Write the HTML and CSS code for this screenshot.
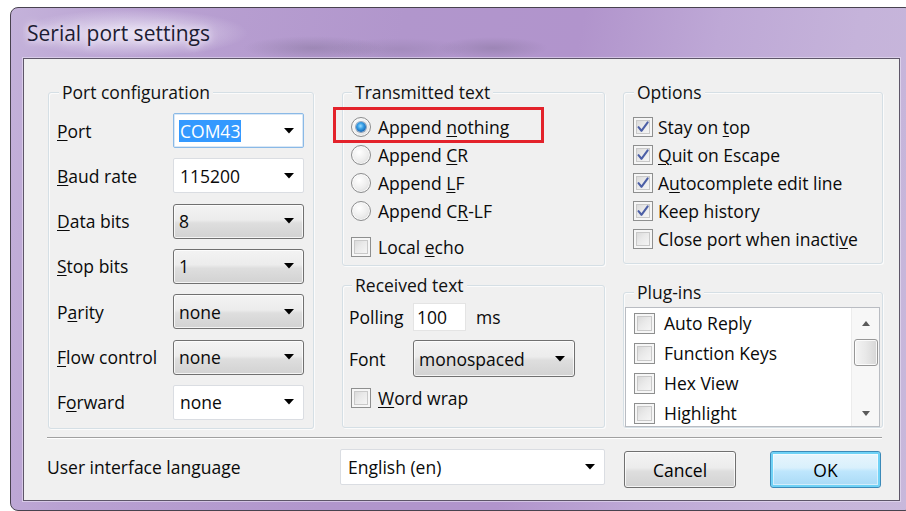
FILE: index.html
```html
<!DOCTYPE html>
<html lang="en">
<head>
<meta charset="utf-8">
<title>Serial port settings</title>
<link rel="stylesheet" href="styles.css">
</head>
<body>
<div class="window">
  <div class="titlebar"><span class="title">Serial port settings</span></div>
  <div class="client">
    <div class="groups">
      <div class="col col-port">
        <div class="group g-port">
          <span class="legend">Port configuration</span>
          <div class="port-grid">
            <span class="lbl"><u>P</u>ort</span>
            <div class="combo combo-edit combo-focus"><span class="sel">COM43</span><svg viewBox="0 0 10 6"><path d="M0 0H10L5 5.5Z"/></svg></div>
            <span class="lbl"><u>B</u>aud rate</span>
            <div class="combo combo-edit"><span>115200</span><svg viewBox="0 0 10 6"><path d="M0 0H10L5 5.5Z"/></svg></div>
            <span class="lbl"><u>D</u>ata bits</span>
            <div class="combo combo-drop"><span>8</span><svg viewBox="0 0 10 6"><path d="M0 0H10L5 5.5Z"/></svg></div>
            <span class="lbl"><u>S</u>top bits</span>
            <div class="combo combo-drop"><span>1</span><svg viewBox="0 0 10 6"><path d="M0 0H10L5 5.5Z"/></svg></div>
            <span class="lbl">P<u>a</u>rity</span>
            <div class="combo combo-drop"><span>none</span><svg viewBox="0 0 10 6"><path d="M0 0H10L5 5.5Z"/></svg></div>
            <span class="lbl"><u>F</u>low control</span>
            <div class="combo combo-drop"><span>none</span><svg viewBox="0 0 10 6"><path d="M0 0H10L5 5.5Z"/></svg></div>
            <span class="lbl">F<u>o</u>rward</span>
            <div class="combo combo-edit"><span>none</span><svg viewBox="0 0 10 6"><path d="M0 0H10L5 5.5Z"/></svg></div>
          </div>
        </div>
      </div>

      <div class="col col-text">
        <div class="group g-tx">
          <span class="legend">Transmitted text</span>
          <div class="radios">
            <div class="opt"><span class="rb on"></span><span>Append <u>n</u>othing</span></div>
            <div class="opt"><span class="rb"></span><span>Append <u>C</u>R</span></div>
            <div class="opt"><span class="rb"></span><span>Append <u>L</u>F</span></div>
            <div class="opt"><span class="rb"></span><span>Append C<u>R</u>-LF</span></div>
          </div>
          <div class="opt echo"><span class="cb"></span><span>Local <u>e</u>cho</span></div>
          <span class="mark"></span>
        </div>
        <div class="group g-rx">
          <span class="legend">Received text</span>
          <div class="rx-row polling">
            <span class="rx-lbl">Polling</span>
            <span class="field">100</span>
            <span class="unit">ms</span>
          </div>
          <div class="rx-row font-row">
            <span class="rx-lbl">Font</span>
            <div class="combo combo-drop combo-font"><span>monospaced</span><svg viewBox="0 0 10 6"><path d="M0 0H10L5 5.5Z"/></svg></div>
          </div>
          <div class="opt wrap"><span class="cb"></span><span><u>W</u>ord wrap</span></div>
        </div>
      </div>

      <div class="col col-opts">
        <div class="group g-opt">
          <span class="legend">Options</span>
          <div class="checks">
            <div class="opt tight"><span class="cb on"><svg viewBox="0 0 20 20"><path d="M5 10.2 8.3 14.2 15.2 4.8"/></svg></span><span>Stay on <u>t</u>op</span></div>
            <div class="opt tight"><span class="cb on"><svg viewBox="0 0 20 20"><path d="M5 10.2 8.3 14.2 15.2 4.8"/></svg></span><span><u>Q</u>uit on Escape</span></div>
            <div class="opt tight"><span class="cb on"><svg viewBox="0 0 20 20"><path d="M5 10.2 8.3 14.2 15.2 4.8"/></svg></span><span>A<u>u</u>tocomplete edit line</span></div>
            <div class="opt tight"><span class="cb on"><svg viewBox="0 0 20 20"><path d="M5 10.2 8.3 14.2 15.2 4.8"/></svg></span><span>Keep history</span></div>
            <div class="opt tight"><span class="cb"></span><span>Close port when inacti<u>v</u>e</span></div>
          </div>
        </div>
        <div class="group g-plug">
          <span class="legend">Plug-ins</span>
          <div class="listbox">
            <div class="items">
              <div class="item"><span class="cb big"></span><span>Auto Reply</span></div>
              <div class="item"><span class="cb big"></span><span>Function Keys</span></div>
              <div class="item"><span class="cb big"></span><span>Hex View</span></div>
              <div class="item"><span class="cb big"></span><span>Highlight</span></div>
            </div>
            <div class="vscroll">
              <span class="sb-btn"><svg viewBox="0 0 8 5"><path d="M0 5H8L4 0Z"/></svg></span>
              <span class="thumb"></span>
              <span class="sb-fill"></span>
              <span class="sb-btn"><svg viewBox="0 0 8 5"><path d="M0 0H8L4 5Z"/></svg></span>
            </div>
          </div>
        </div>
      </div>
    </div>

    <div class="separator"></div>

    <div class="footer">
      <span class="footer-lbl">User interface language</span>
      <div class="combo combo-edit combo-lang"><span>English (en)</span><svg viewBox="0 0 10 6"><path d="M0 0H10L5 5.5Z"/></svg></div>
      <button class="btn btn-cancel" type="button">Cancel</button>
      <button class="btn btn-ok" type="button">OK</button>
    </div>
  </div>
</div>
</body>
</html>
```

FILE: styles.css
```css
html, body {
  margin: 0;
  background: #fff;
  overflow: hidden;
}

body {
  font-family: "Open Sans", "Noto Sans", sans-serif;
  font-size: 17.5px;
  color: #0a0a0a;
}

u {
  text-underline-offset: 2px;
  text-decoration-thickness: 1px;
}

/* ---- window frame ---- */
.window {
  box-sizing: border-box;
  width: 903px;
  height: 504px;
  margin: 7px 0 0 10px;
  border: 1px solid #48424f;
  border-radius: 8px;
  padding: 0 12px 9px;
  display: flex;
  flex-direction: column;
  background: linear-gradient(100deg, #c4b2da 0%, #b9a1d2 14%, #b196cc 40%, #b194cc 58%, #bea8d6 72%, #c5b3da 86%, #c8b8db 100%);
}

.titlebar {
  flex: none;
  height: 50px;
  display: flex;
  align-items: center;
  padding-left: 4px;
  background:
    radial-gradient(ellipse 115px 24px at 110px 25px, rgba(236, 230, 246, 0.95), rgba(236, 230, 246, 0) 100%),
    radial-gradient(ellipse 70px 12px at 290px 40px, rgba(110, 98, 130, 0.32), rgba(110, 98, 130, 0) 100%),
    radial-gradient(ellipse 70px 11px at 375px 41px, rgba(110, 98, 130, 0.2), rgba(110, 98, 130, 0) 100%),
    radial-gradient(ellipse 55px 11px at 470px 40px, rgba(110, 98, 130, 0.3), rgba(110, 98, 130, 0) 100%);
}

.title {
  font-size: 21px;
  color: #1d1c33;
  text-shadow: 0 0 6px #f3eefa, 0 0 12px #efe8f7;
}

.client {
  flex: none;
  box-sizing: border-box;
  height: 443px;
  border: 1px solid #5e5669;
  box-shadow: 0 0 0 1px rgba(236, 230, 246, 0.55);
  background: #f0f0f0;
  padding: 33px 0 0 24px;
}

/* ---- group boxes ---- */
.groups {
  display: flex;
  align-items: flex-start;
  height: 337px;
}

.col {
  flex: none;
  display: flex;
  flex-direction: column;
}

.col-port { width: 266px; }
.col-text { width: 263px; margin-left: 28px; }
.col-opts { width: 260px; margin-left: 18px; }

.group {
  position: relative;
  box-sizing: border-box;
  display: flex;
  flex-direction: column;
  border: 1px solid #d5dfe5;
  border-radius: 3px;
  box-shadow: inset 1px 1px 0 #fbfbfb, 1px 1px 0 #fbfbfb;
}

.legend {
  align-self: flex-start;
  height: 22px;
  line-height: 22px;
  margin: -12px 0 0 10px;
  padding: 0 3px;
  background: #f0f0f0;
  color: #111;
}

.g-port { height: 337px; }
.g-tx { height: 174px; padding-left: 8px; }
.g-rx { height: 143px; margin-top: 19px; padding-left: 6px; }
.g-opt { height: 172px; padding-left: 9px; }
.g-plug { height: 136px; margin-top: 28px; }

/* legends keep the same offset from the box edge whatever the padding */
.g-tx .legend { margin-left: 1px; }
.g-rx .legend { margin-left: 3px; }
.g-opt .legend { margin-left: 1px; }

/* ---- port configuration ---- */
.port-grid {
  display: grid;
  grid-template-columns: 1fr 131px;
  grid-auto-rows: 35px;
  row-gap: 10.33px;
  align-items: center;
  margin-top: 10px;
  padding: 0 9px 0 8px;
}

.combo {
  box-sizing: border-box;
  display: flex;
  align-items: center;
  justify-content: space-between;
  height: 35px;
  padding: 0 9px 0 6px;
  white-space: nowrap;
}

.combo svg {
  flex: none;
  width: 10px;
  height: 6px;
  fill: #000;
}

.combo-edit {
  background: #fff;
  border: 1px solid #dadde2;
  border-radius: 2px;
}

.combo-focus {
  border-color: #8ab9e6;
  box-shadow: inset 0 0 0 1px #d9e8f7;
}

.combo-focus .sel {
  background: #3399ff;
  color: #fff;
  line-height: 22px;
  padding: 0 1px;
  margin-left: -1px;
}

.combo-drop {
  padding-left: 5px;
  border: 1px solid #707070;
  border-radius: 3px;
  background: linear-gradient(#f3f3f3 0%, #ececec 45%, #dedede 55%, #d2d2d2 100%);
  box-shadow: inset 0 0 0 1px rgba(255, 255, 255, 0.75);
}

/* ---- radios and checkboxes ---- */
.radios {
  margin-top: 10px;
  display: flex;
  flex-direction: column;
}

.opt {
  display: flex;
  align-items: center;
  gap: 7px;
  height: 28px;
  white-space: nowrap;
}

.opt.tight { gap: 5px; }

.echo { margin-top: 8px; }

.rb {
  box-sizing: border-box;
  flex: none;
  width: 20px;
  height: 20px;
  border-radius: 50%;
  border: 1px solid #8c8d8e;
  background: radial-gradient(circle at 40% 35%, #ffffff 0%, #ececec 55%, #cfcfcf 100%);
  box-shadow: inset 0 0 0 1px rgba(255, 255, 255, 0.8);
  display: flex;
  align-items: center;
  justify-content: center;
}

.rb.on::after {
  content: "";
  width: 10px;
  height: 10px;
  border-radius: 50%;
  background: radial-gradient(circle at 45% 40%, #9edcff 0%, #39a0e6 35%, #1a6bb8 70%, #144f8c 100%);
  box-shadow: 0 0 0 1px rgba(30, 70, 120, 0.45);
}

.cb {
  box-sizing: border-box;
  flex: none;
  width: 20px;
  height: 20px;
  border: 1px solid #8e8f8f;
  background: linear-gradient(135deg, #d2d2d2 0%, #e9e9e9 45%, #fafafa 100%);
  box-shadow: inset 0 0 0 2px #f6f6f6, inset 0 0 0 3px #c9c9c9;
  display: flex;
}

.cb.big {
  width: 21px;
  height: 21px;
}

.cb svg {
  width: 18px;
  height: 18px;
  fill: none;
  stroke: #4c5fa6;
  stroke-width: 2.3;
  stroke-linecap: round;
  stroke-linejoin: round;
}

.checks {
  margin-top: 10px;
  display: flex;
  flex-direction: column;
}

/* annotation frame around the first transmit option */
.mark {
  position: absolute;
  left: -10px;
  top: 14px;
  width: 211px;
  height: 36px;
  box-sizing: border-box;
  border: 3px solid #e3222b;
}

/* ---- received text ---- */
.rx-row {
  display: flex;
  align-items: center;
}

.rx-lbl {
  flex: none;
  width: 64px;
}

.polling {
  margin-top: 7px;
  height: 28px;
}

.field {
  box-sizing: border-box;
  width: 53px;
  height: 28px;
  line-height: 26px;
  padding-left: 3px;
  background: #fff;
  border: 1px solid #e4e4e4;
}

.unit { margin-left: 10px; }

.font-row {
  margin-top: 9px;
  height: 37px;
}

.combo-font {
  width: 162px;
  height: 37px;
  padding-left: 5px;
}

.wrap {
  margin-top: 7px;
  margin-left: 2px;
}

/* ---- plug-in list ---- */
.listbox {
  box-sizing: border-box;
  display: flex;
  width: 255px;
  height: 120px;
  margin: 4px 0 0 1px;
  border: 1px solid #b9bcc2;
  background: #fff;
  overflow: hidden;
}

.items {
  flex: 1;
  padding-left: 8px;
}

.item {
  display: flex;
  align-items: center;
  gap: 9px;
  height: 30px;
  white-space: nowrap;
}

.vscroll {
  flex: none;
  width: 27px;
  display: flex;
  flex-direction: column;
  align-items: center;
  background: #f7f7f7;
  border-left: 1px solid #ececec;
}

.sb-btn {
  flex: none;
  height: 30px;
  display: flex;
  align-items: center;
  justify-content: center;
}

.sb-btn:last-child { height: 26px; }

.sb-btn svg {
  width: 8px;
  height: 5px;
  fill: #5a5a5a;
}

.thumb {
  flex: none;
  box-sizing: border-box;
  width: 24px;
  height: 27px;
  margin-top: 1px;
  border: 1px solid #979797;
  border-radius: 3px;
  background: linear-gradient(90deg, #f4f4f4 0%, #e8e8e8 50%, #d6d6d6 100%);
  box-shadow: inset 0 0 0 1px rgba(255, 255, 255, 0.8);
}

.sb-fill { flex: 1; }

/* ---- bottom bar ---- */
.separator {
  width: 835px;
  height: 1px;
  margin: 8px 0 0 -1px;
  background: #a0a0a0;
  border-bottom: 1px solid #fff;
}

.footer {
  display: flex;
  align-items: flex-start;
  margin-top: 10px;
  margin-left: -1px;
}

.footer-lbl {
  flex: none;
  width: 293px;
  line-height: 36px;
}

.combo-lang {
  width: 265px;
  height: 36px;
  padding: 0 9px 0 7px;
}

.btn {
  box-sizing: border-box;
  flex: none;
  height: 37px;
  margin-top: 2px;
  font: inherit;
  color: #000;
  padding: 0;
  border-radius: 3px;
}

.btn-cancel {
  width: 112px;
  margin-left: 19px;
  border: 1px solid #707070;
  background: linear-gradient(#f3f3f3 0%, #ececec 45%, #dedede 55%, #d2d2d2 100%);
  box-shadow: inset 0 0 0 1px rgba(255, 255, 255, 0.75);
}

.btn-ok {
  width: 111px;
  margin-left: 34px;
  border: 1px solid #3c8ab8;
  background: linear-gradient(#eaf6fd 0%, #d9f0fc 45%, #bee6fd 55%, #a7d9f5 100%);
  box-shadow: inset 0 0 0 2px #6fd2f6, inset 0 0 0 3px rgba(255, 255, 255, 0.5);
}
```
